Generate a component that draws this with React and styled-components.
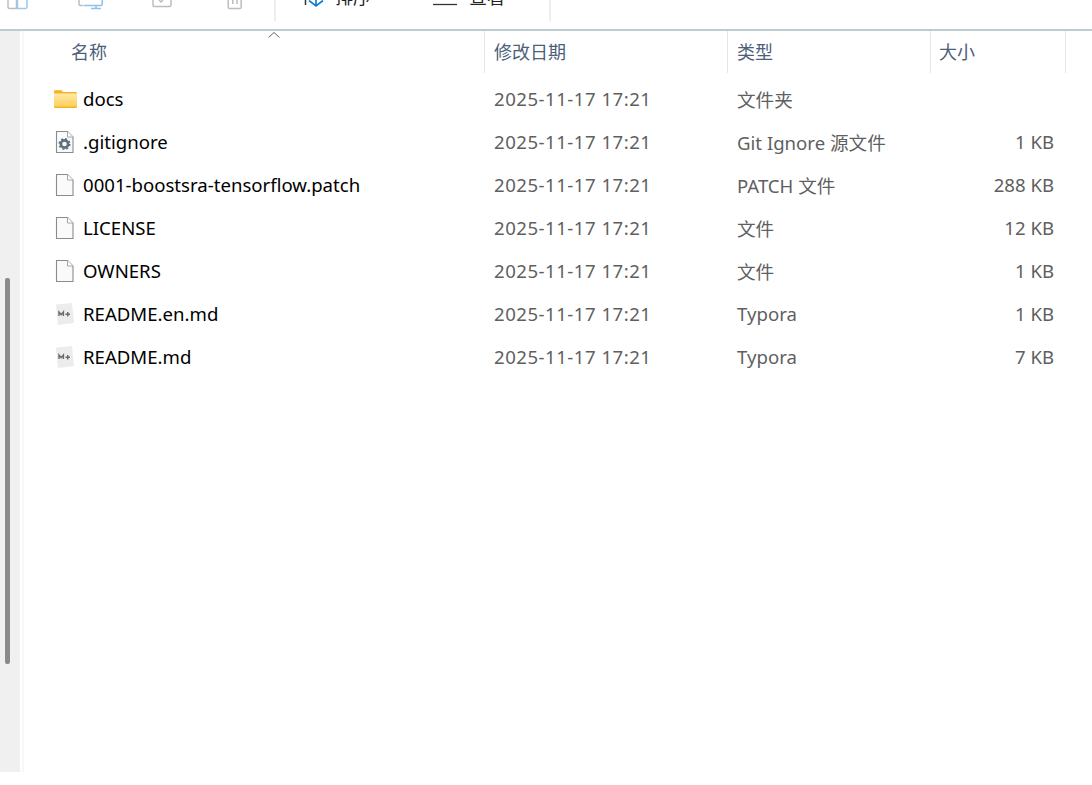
import React from 'react';
import styled, { createGlobalStyle } from 'styled-components';

const Global = createGlobalStyle`
  html, body { margin: 0; padding: 0; background: #fff; overflow: hidden; }
  body { font-family: "Noto Sans", "Noto Sans CJK SC", sans-serif; }
`;

const Page = styled.div`
  width: 1092px;
  height: 785px;
  display: flex;
  flex-direction: column;
  overflow: hidden;
`;

const Toolbar = styled.div`
  height: 29px;
  flex: none;
  display: flex;
  align-items: flex-start;
  border-bottom: 2px solid #bfcccf;
  overflow: hidden;
`;

const ToolIcon = styled.svg`
  flex: none;
  display: block;
  margin-left: ${({ $left }) => $left}px;
`;

const ToolDivider = styled.div`
  flex: none;
  width: 2px;
  height: 21px;
  margin-left: ${({ $left }) => $left}px;
  background: #eeeeee;
`;

const ToolLabel = styled.span`
  flex: none;
  margin-left: ${({ $left }) => $left}px;
  margin-top: -15px;
  font-size: 18px;
  line-height: 24px;
  color: #222;
`;

const Body = styled.div`
  display: flex;
  height: 741px;
`;

const Side = styled.div`
  width: 20px;
  flex: none;
  background: #f0f0f0;
  padding: 247px 0 0 5px;
  box-sizing: border-box;
`;

const Thumb = styled.div`
  width: 5px;
  height: 386px;
  background: #8a8a8a;
  border-radius: 2px;
`;

const Edge = styled.div`
  width: 2px;
  flex: none;
  margin-left: 2px;
  background: #f7f7f7;
`;

const Main = styled.div`
  flex: 1;
  min-width: 0;
`;

const Header = styled.div`
  display: grid;
  grid-template-columns: 461px 243px 203px 135px;
  height: 40px;
  position: relative;
`;

const HeaderCell = styled.div`
  padding-left: ${({ $pad }) => $pad}px;
  border-right: 1px solid #e3e5e7;
  font-size: 18px;
  line-height: 42px;
  color: #4c607a;
`;

const SortMark = styled.svg`
  position: absolute;
  left: 243px;
  top: 0;
`;

const Rows = styled.div`
  padding-top: 6px;
`;

const Row = styled.div`
  display: grid;
  grid-template-columns: 461px 243px 203px 123px;
  height: 43px;
  align-items: center;
  font-size: 18.6px;
`;

const NameCell = styled.div`
  display: flex;
  align-items: center;
  padding-left: 30px;
  color: #000;
`;

const IconSlot = styled.div`
  width: 24px;
  height: 24px;
  flex: none;
  margin-right: 5px;
`;

const Info = styled.div`
  padding-left: ${({ $pad }) => $pad}px;
  color: #5f5f5f;
  text-align: ${({ $right }) => ($right ? 'right' : 'left')};
`;

const DateInfo = styled(Info)`
  letter-spacing: 0.5px;
`;

const FolderIcon = () => (
  <svg width="24" height="24" viewBox="0 0 24 24">
    <defs>
      <linearGradient id="folderBody" x1="0" y1="0" x2="0" y2="1">
        <stop offset="0" stopColor="#ffeaa6" />
        <stop offset="1" stopColor="#ffcf5c" />
      </linearGradient>
    </defs>
    <path d="M0 4.500C0 3.700.6 3.200 1.300 3.200h6l2.400 2.300H0z" fill="#f5b21a" />
    <rect x="0" y="5" width="23" height="16" rx="1" fill="#f3b42a" />
    <rect x="0" y="6.500" width="23" height="13" fill="url(#folderBody)" />
  </svg>
);

const PageIcon = ({ children }) => (
  <svg width="24" height="24" viewBox="0 0 24 24">
    <path d="M2.500 1.500h11l5.500 5.500v15.500H2.500z" fill="#fafafa" stroke="#8b8b8b" strokeWidth="1.100" />
    <path d="M13.500 1.500V7H19" fill="#fff" stroke="#a5a5a5" strokeWidth="1" />
    {children}
  </svg>
);

const GearIcon = () => (
  <PageIcon>
    <circle cx="10.500" cy="14" r="3.600" fill="none" stroke="#5f7178" strokeWidth="2.600" />
    <circle cx="10.500" cy="14" r="5.300" fill="none" stroke="#5f7178" strokeWidth="1.500" strokeDasharray="2 2.160" />
  </PageIcon>
);

const TyporaIcon = () => (
  <svg width="24" height="24" viewBox="0 0 24 24">
    <path d="M2 2.500l16-1.500 2 20-16 2z" fill="#ececec" />
    <path d="M5 14v-4l2.200 2.600L9.400 10v4" fill="none" stroke="#6a6a6a" strokeWidth="1.400" />
    <path d="M11.500 12.200h4.500M13.700 10v4.400" fill="none" stroke="#6a6a6a" strokeWidth="1.400" />
  </svg>
);

const files = [
  { name: 'docs', icon: <FolderIcon />, type: '文件夹', size: '' },
  { name: '.gitignore', icon: <GearIcon />, type: 'Git Ignore 源文件', size: '1 KB' },
  { name: '0001-boostsra-tensorflow.patch', icon: <PageIcon />, type: 'PATCH 文件', size: '288 KB' },
  { name: 'LICENSE', icon: <PageIcon />, type: '文件', size: '12 KB' },
  { name: 'OWNERS', icon: <PageIcon />, type: '文件', size: '1 KB' },
  { name: 'README.en.md', icon: <TyporaIcon />, type: 'Typora', size: '1 KB' },
  { name: 'README.md', icon: <TyporaIcon />, type: 'Typora', size: '7 KB' },
];

export default function App() {
  return (
    <Page>
      <Global />
      <Toolbar>
        <ToolIcon $left={7} width="22" height="10" viewBox="0 0 22 10">
          <path d="M1 0v7c0 1 .7 1.500 1.500 1.500H9.500V0" fill="none" stroke="#bdbdbd" strokeWidth="1.500" />
          <path d="M10.500 0v8.500h8c1 0 1.500-.5 1.500-1.500V0" fill="none" stroke="#9fc9ec" strokeWidth="1.500" />
        </ToolIcon>
        <ToolIcon $left={49} width="25" height="12" viewBox="0 0 25 12">
          <path d="M1 0v4c0 1 .7 1.500 1.500 1.500h3" fill="none" stroke="#bdbdbd" strokeWidth="1.500" />
          <path d="M6 5.500h17c.7 0 1.200-.5 1.200-1.500V0M13 8.500h10M18 5v3.500" fill="none" stroke="#8fc2ea" strokeWidth="1.500" />
        </ToolIcon>
        <ToolIcon $left={49} width="20" height="10" viewBox="0 0 20 10">
          <path d="M1 0v5c0 1 .7 1.500 1.500 1.500h15c1 0 1.500-.5 1.500-1.500V0M7 0l2 2 2-2" fill="none" stroke="#bdbdbd" strokeWidth="1.500" />
        </ToolIcon>
        <ToolIcon $left={55} width="16" height="10" viewBox="0 0 16 10">
          <path d="M1.200 0v7c0 1 .7 1.500 1.500 1.500h10c1 0 1.500-.5 1.500-1.500V0M5.800 0v4M10 0v4" fill="none" stroke="#bdbdbd" strokeWidth="1.500" />
        </ToolIcon>
        <ToolDivider $left={31} />
        <ToolIcon $left={28} width="22" height="8" viewBox="0 0 22 8">
          <path d="M1.500 0v5" fill="none" stroke="#333" strokeWidth="1.500" />
          <path d="M12 0v6M5 .500l7 5.500 7-5.500" fill="none" stroke="#0f7fd4" strokeWidth="1.700" />
        </ToolIcon>
        <ToolLabel $left={9}>排序</ToolLabel>
        <ToolIcon $left={62} width="24" height="6" viewBox="0 0 24 6">
          <path d="M0 4.500h24" stroke="#333" strokeWidth="1.300" />
        </ToolIcon>
        <ToolLabel $left={12}>查看</ToolLabel>
        <ToolDivider $left={44} />
      </Toolbar>
      <Body>
        <Side><Thumb /></Side>
        <Edge />
        <Main>
          <Header>
            <SortMark width="14" height="8" viewBox="0 0 14 8">
              <path d="M1.500 6.500L7 1.500l5.500 5" fill="none" stroke="#666" strokeWidth="1" />
            </SortMark>
            <HeaderCell $pad={47}>名称</HeaderCell>
            <HeaderCell $pad={9}>修改日期</HeaderCell>
            <HeaderCell $pad={9}>类型</HeaderCell>
            <HeaderCell $pad={8}>大小</HeaderCell>
          </Header>
          <Rows>
            {files.map((f) => (
              <Row key={f.name}>
                <NameCell>
                  <IconSlot>{f.icon}</IconSlot>
                  {f.name}
                </NameCell>
                <DateInfo $pad={9}>2025-11-17 17:21</DateInfo>
                <Info $pad={9}>{f.type}</Info>
                <Info $right>{f.size}</Info>
              </Row>
            ))}
          </Rows>
        </Main>
      </Body>
    </Page>
  );
}
